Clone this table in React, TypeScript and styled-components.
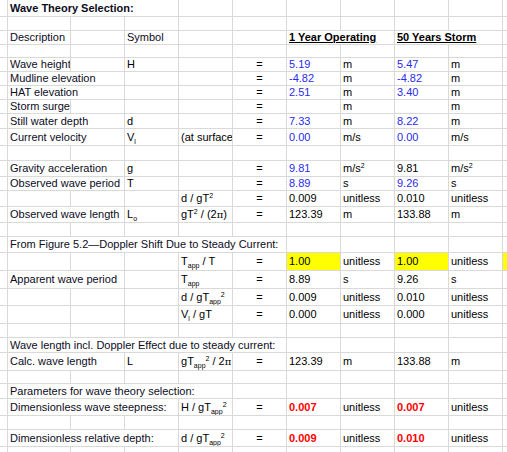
import React from "react";
import styled, { createGlobalStyle, css } from "styled-components";

const Global = createGlobalStyle`
  html, body { margin: 0; padding: 0; background: #fff; }
  body { font-family: "Liberation Sans", Arial, sans-serif; font-size: 11px; color: #000; }
`;

const Sheet = styled.div`
  width: 507px;
  height: 452px;
  overflow: hidden;
  display: flex;
  flex-direction: column;
`;

const Row = styled.div<{ $h: number }>`
  display: grid;
  grid-template-columns: 8px 63px 54px 54px 54px 54px 54px 54px 54px 54px 1fr;
  height: ${(p) => p.$h}px;
  flex: none;
`;

type Tone = "label" | "input" | "red" | "plain";

const toneColor: Record<Tone, string> = {
  label: "#0c0c1c",
  input: "#2a2af0",
  red: "#ff0000",
  plain: "#000",
};

const Cell = styled.div<{
  $span?: number;
  $tone?: Tone;
  $bold?: boolean;
  $under?: boolean;
  $center?: boolean;
  $fill?: string;
}>`
  box-sizing: border-box;
  grid-column: span ${(p) => p.$span ?? 1};
  border-right: 1px solid #d9d9d9;
  border-bottom: 1px solid #d9d9d9;
  background: ${(p) => p.$fill ?? "transparent"};
  display: flex;
  align-items: center;
  justify-content: ${(p) => (p.$center ? "center" : "flex-start")};
  padding: 0 2px;
  white-space: nowrap;
  overflow: hidden;
  color: ${(p) => toneColor[p.$tone ?? "plain"]};
  font-weight: ${(p) => (p.$bold ? 700 : 400)};
  ${(p) =>
    p.$under &&
    css`
      text-decoration: underline;
      text-underline-offset: 1px;
    `}
`;

const Content = styled.span`
  display: inline-block;
  line-height: 13px;
`;

const Sub = styled.span`
  font-size: 7px;
  line-height: 0;
  vertical-align: -3px;
`;

const Sup = styled.span`
  font-size: 7px;
  line-height: 0;
  vertical-align: 4px;
`;

const Pi = styled.span`
  font-family: "DejaVu Serif", "Liberation Serif", serif;
  font-size: 10px;
`;

const YELLOW = "#ffff00";

type C = {
  col: number;
  span?: number;
  text: React.ReactNode;
  tone?: Tone;
  bold?: boolean;
  under?: boolean;
  center?: boolean;
  fill?: string;
};

const Tapp = () => (
  <>
    T<Sub>app</Sub>
  </>
);

const eq = (): C => ({ col: 5, text: "=", center: true });

const vals = (
  a: React.ReactNode,
  ua: React.ReactNode,
  b: React.ReactNode,
  ub: React.ReactNode,
  ta: Tone = "plain",
  tb: Tone = "plain",
  bold = false
): C[] => [
  eq(),
  { col: 6, text: a, tone: ta, bold },
  { col: 7, text: ua },
  { col: 8, text: b, tone: tb, bold },
  { col: 9, text: ub },
];

const rows: { h: number; cells: C[] }[] = [
  { h: 17, cells: [{ col: 1, span: 3, text: "Wave Theory Selection:", bold: true, tone: "label" }] },
  { h: 14, cells: [] },
  {
    h: 14,
    cells: [
      { col: 1, text: "Description", tone: "label" },
      { col: 3, text: "Symbol", tone: "label" },
      { col: 6, span: 2, text: "1 Year Operating", bold: true, under: true },
      { col: 8, span: 2, text: "50 Years Storm", bold: true, under: true },
    ],
  },
  { h: 13, cells: [] },
  {
    h: 14,
    cells: [
      { col: 1, text: "Wave height", tone: "label" },
      { col: 3, text: "H" },
      ...vals("5.19", "m", "5.47", "m", "input", "input"),
    ],
  },
  {
    h: 14,
    cells: [
      { col: 1, span: 2, text: "Mudline elevation", tone: "label" },
      ...vals("-4.82", "m", "-4.82", "m", "input", "input"),
    ],
  },
  {
    h: 14,
    cells: [
      { col: 1, span: 2, text: "HAT elevation", tone: "label" },
      ...vals("2.51", "m", "3.40", "m", "input", "input"),
    ],
  },
  {
    h: 14,
    cells: [{ col: 1, text: "Storm surge", tone: "label" }, ...vals("", "m", "", "m")],
  },
  {
    h: 15,
    cells: [
      { col: 1, span: 2, text: "Still water depth", tone: "label" },
      { col: 3, text: "d" },
      ...vals("7.33", "m", "8.22", "m", "input", "input"),
    ],
  },
  {
    h: 17,
    cells: [
      { col: 1, span: 2, text: "Current velocity", tone: "label" },
      {
        col: 3,
        text: (
          <>
            V<Sub>l</Sub>
          </>
        ),
      },
      { col: 4, text: "(at surface" },
      ...vals("0.00", "m/s", "0.00", "m/s", "input", "input"),
    ],
  },
  { h: 15, cells: [] },
  {
    h: 16,
    cells: [
      { col: 1, span: 2, text: "Gravity acceleration", tone: "label" },
      { col: 3, text: "g" },
      ...vals(
        "9.81",
        <>
          m/s<Sup>2</Sup>
        </>,
        "9.81",
        <>
          m/s<Sup>2</Sup>
        </>,
        "input",
        "plain"
      ),
    ],
  },
  {
    h: 14,
    cells: [
      { col: 1, span: 2, text: "Observed wave period", tone: "label" },
      { col: 3, text: "T" },
      ...vals("8.89", "s", "9.26", "s", "input", "input"),
    ],
  },
  {
    h: 16,
    cells: [
      {
        col: 4,
        text: (
          <>
            d / gT<Sup>2</Sup>
          </>
        ),
      },
      ...vals("0.009", "unitless", "0.010", "unitless"),
    ],
  },
  {
    h: 16,
    cells: [
      { col: 1, span: 2, text: "Observed wave length", tone: "label" },
      {
        col: 3,
        text: (
          <>
            L<Sub>o</Sub>
          </>
        ),
      },
      {
        col: 4,
        text: (
          <>
            gT<Sup>2</Sup> / (2<Pi>π</Pi>)
          </>
        ),
      },
      ...vals("123.39", "m", "133.88", "m"),
    ],
  },
  { h: 14, cells: [] },
  {
    h: 16,
    cells: [
      { col: 1, span: 5, text: "From Figure 5.2\u2014Doppler Shift Due to Steady Current:", tone: "label" },
    ],
  },
  {
    h: 18,
    cells: [
      {
        col: 4,
        text: (
          <>
            <Tapp /> / T
          </>
        ),
      },
      eq(),
      { col: 6, text: "1.00", fill: YELLOW },
      { col: 7, text: "unitless" },
      { col: 8, text: "1.00", fill: YELLOW },
      { col: 9, text: "unitless" },
      { col: 10, text: "", fill: YELLOW },
    ],
  },
  {
    h: 18,
    cells: [
      { col: 1, span: 2, text: "Apparent wave period", tone: "label" },
      { col: 4, text: <Tapp /> },
      ...vals("8.89", "s", "9.26", "s"),
    ],
  },
  {
    h: 17,
    cells: [
      {
        col: 4,
        text: (
          <>
            d / g<Tapp />
            <Sup>2</Sup>
          </>
        ),
      },
      ...vals("0.009", "unitless", "0.010", "unitless"),
    ],
  },
  {
    h: 18,
    cells: [
      {
        col: 4,
        text: (
          <>
            V<Sub>l</Sub> / gT
          </>
        ),
      },
      ...vals("0.000", "unitless", "0.000", "unitless"),
    ],
  },
  { h: 14, cells: [] },
  {
    h: 15,
    cells: [
      { col: 1, span: 5, text: "Wave length incl. Doppler Effect due to steady current:", tone: "label" },
    ],
  },
  {
    h: 18,
    cells: [
      { col: 1, span: 2, text: "Calc. wave length", tone: "label" },
      { col: 3, text: "L" },
      {
        col: 4,
        text: (
          <>
            g<Tapp />
            <Sup>2</Sup> / 2<Pi>π</Pi>
          </>
        ),
      },
      ...vals("123.39", "m", "133.88", "m"),
    ],
  },
  { h: 13, cells: [] },
  {
    h: 15,
    cells: [{ col: 1, span: 4, text: "Parameters for wave theory selection:", tone: "label" }],
  },
  {
    h: 17,
    cells: [
      { col: 1, span: 3, text: "Dimensionless wave steepness:", tone: "label" },
      {
        col: 4,
        text: (
          <>
            H / g<Tapp />
            <Sup>2</Sup>
          </>
        ),
      },
      ...vals("0.007", "unitless", "0.007", "unitless", "red", "red", true),
    ],
  },
  { h: 14, cells: [] },
  {
    h: 17,
    cells: [
      { col: 1, span: 3, text: "Dimensionless relative depth:", tone: "label" },
      {
        col: 4,
        text: (
          <>
            d / g<Tapp />
            <Sup>2</Sup>
          </>
        ),
      },
      ...vals("0.009", "unitless", "0.010", "unitless", "red", "red", true),
    ],
  },
  { h: 17, cells: [] },
];

function fillRow(cells: C[]): C[] {
  const out: C[] = [];
  const sorted = [...cells].sort((a, b) => a.col - b.col);
  let col = 0;
  for (const c of sorted) {
    while (col < c.col) {
      out.push({ col, text: "" });
      col++;
    }
    out.push(c);
    col += c.span ?? 1;
  }
  while (col < 11) {
    out.push({ col, text: "" });
    col++;
  }
  return out;
}

export default function App() {
  return (
    <>
      <Global />
      <Sheet>
        {rows.map((r, i) => (
          <Row key={i} $h={r.h}>
            {fillRow(r.cells).map((c) => (
              <Cell
                key={c.col}
                $span={c.span}
                $tone={c.tone}
                $bold={c.bold}
                $under={c.under}
                $center={c.center}
                $fill={c.fill}
              >
                {c.text !== "" && <Content>{c.text}</Content>}
              </Cell>
            ))}
          </Row>
        ))}
      </Sheet>
    </>
  );
}
